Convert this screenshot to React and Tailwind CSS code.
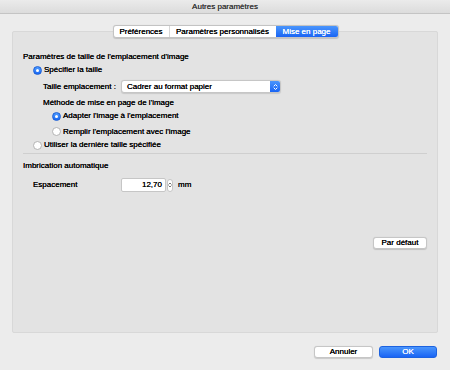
import React from "react";

const font = { fontFamily: '"Liberation Sans", Arial, sans-serif' };

function Radio({ checked }) {
  return checked ? (
    <span className="w-[9px] h-[9px] rounded-full bg-gradient-to-b from-[#4f9bfd] to-[#1967f3] border border-[#1a5fd8] flex items-center justify-center shrink-0">
      <span className="w-[3px] h-[3px] rounded-full bg-white" />
    </span>
  ) : (
    <span className="w-[9px] h-[9px] rounded-full bg-white border border-[#b3b3b3] shrink-0" />
  );
}

function Chevrons({ color = "#fff", w = 5 }) {
  return (
    <svg width={w} height="8" viewBox="0 0 5 8" fill="none" stroke={color} strokeWidth="1" strokeLinecap="round" strokeLinejoin="round">
      <path d="M1 3 L2.5 1.5 L4 3" />
      <path d="M1 5 L2.5 6.5 L4 5" />
    </svg>
  );
}

export default function App() {
  return (
    <div className="w-[450px] h-[370px] bg-[#ececec] text-[8px] leading-[10px] text-black flex flex-col overflow-hidden [text-shadow:0_0_0.35px_currentColor]" style={font}>
      {/* Title bar */}
      <div className="h-[14px] shrink-0 bg-gradient-to-b from-[#ebebeb] to-[#dcdcdc] border-b border-[#c4c4c4] flex items-center justify-center">
        <span className="text-[#3a3a3a]">Autres paramètres</span>
      </div>

      {/* Tabs */}
      <div className="relative z-10 mt-[11px] h-[13px] flex justify-center">
        <div className="ml-[1px] flex h-[13px] rounded-[3px] border border-[#c3c3c3] bg-white shadow-[0_0.5px_1px_rgba(0,0,0,0.15)] overflow-hidden">
          <div className="w-[56px] flex items-center justify-center border-r border-[#d6d6d6]">Préférences</div>
          <div className="w-[106px] flex items-center justify-center">Paramètres personnalisés</div>
          <div className="w-[62px] flex items-center justify-center bg-gradient-to-b from-[#4a95fc] to-[#1a64f4] text-white">Mise en page</div>
        </div>
      </div>

      {/* Panel */}
      <div className="-mt-[7px] ml-[12px] w-[426px] h-[302px] shrink-0 bg-[#e3e3e3] border border-[#d8d8d8] rounded-[2px] pt-[18px] pl-[10px] pr-[10px] flex flex-col">
        <div className="h-[13px] flex items-center">Paramètres de taille de l'emplacement d'image</div>
        <div className="h-[14px] flex items-center gap-[2px] pl-[10px]">
          <Radio checked />
          <span>Spécifier la taille</span>
        </div>
        <div className="h-[19px] flex items-center pl-[20px]">
          <span className="w-[78px]">Taille emplacement :</span>
          <div className="w-[160px] h-[13px] flex bg-white border border-[#c6c6c6] rounded-[3px] shadow-[0_0.5px_1px_rgba(0,0,0,0.12)] overflow-hidden">
            <span className="flex-1 flex items-center pl-[5px]">Cadrer au format papier</span>
            <span className="w-[10px] bg-gradient-to-b from-[#4a95fc] to-[#1a64f4] flex items-center justify-center">
              <Chevrons />
            </span>
          </div>
        </div>
        <div className="h-[13px] flex items-center pl-[20px]">Méthode de mise en page de l'image</div>
        <div className="h-[14px] flex items-center gap-[2px] pl-[29px]">
          <Radio checked />
          <span>Adapter l'image à l'emplacement</span>
        </div>
        <div className="h-[17px] flex items-center gap-[2px] pl-[29px]">
          <Radio />
          <span>Remplir l'emplacement avec l'image</span>
        </div>
        <div className="h-[10px] flex items-center gap-[2px] pl-[10px]">
          <Radio />
          <span>Utiliser la dernière taille spécifiée</span>
        </div>
        <div className="mt-[3px] h-px bg-[#cfcfcf]" />
        <div className="h-[23px] flex items-center">Imbrication automatique</div>
        <div className="h-[16px] flex items-center pl-[10px]">
          <span className="w-[88px]">Espacement</span>
          <div className="w-[45px] h-[14px] bg-white border border-[#c6c6c6] rounded-[2px] flex items-center justify-end pr-[3px]">12,70</div>
          <div className="ml-[1px] w-[6px] h-[13px] bg-white border border-[#c6c6c6] rounded-full flex items-center justify-center">
            <Chevrons color="#555" w={4} />
          </div>
          <span className="ml-[5px]">mm</span>
        </div>
        <div className="mt-[44px] flex justify-end">
          <div className="w-[54px] h-[12px] bg-white border border-[#c6c6c6] rounded-[3px] shadow-[0_0.5px_1px_rgba(0,0,0,0.15)] flex items-center justify-center">Par défaut</div>
        </div>
      </div>

      {/* Bottom buttons */}
      <div className="mt-[13px] flex justify-end gap-[6px] pr-[13px]">
        <div className="w-[59px] h-[12px] bg-white border border-[#c6c6c6] rounded-[3px] shadow-[0_0.5px_1px_rgba(0,0,0,0.15)] flex items-center justify-center">Annuler</div>
        <div className="w-[58px] h-[12px] bg-gradient-to-b from-[#4a95fc] to-[#1a64f4] border border-[#1c62e0] rounded-[3px] text-white flex items-center justify-center">OK</div>
      </div>
    </div>
  );
}
